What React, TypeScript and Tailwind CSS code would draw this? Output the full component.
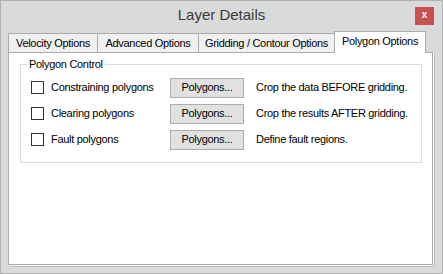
const rows = [
  { label: "Constraining polygons", note: "Crop the data BEFORE gridding." },
  { label: "Clearing polygons", note: "Crop the results AFTER gridding." },
  { label: "Fault polygons", note: "Define fault regions." },
];

const tabs = [
  { name: "Velocity Options", w: "w-[90px]" },
  { name: "Advanced Options", w: "w-[102px]" },
  { name: "Gridding / Contour Options", w: "w-[137px]" },
];

export default function App() {
  return (
    <div className="w-[443px] h-[274px] bg-[#dadada] border border-[#b0b0b0] flex flex-col font-['Liberation_Sans',Arial,sans-serif] text-[11px] tracking-[-0.3px] text-black">
      {/* title bar */}
      <div className="h-[30px] grid grid-cols-[1fr_auto_1fr] items-center">
        <div />
        <div className="text-[15px] tracking-normal text-[#3a3a3a] pb-[1px]">Layer Details</div>
        <div className="flex justify-end pr-[8px]">
          <div className="w-[19px] h-[18px] bg-[#c75050] flex items-center justify-center text-white text-[10px] font-bold leading-none pb-[2px]">
            x
          </div>
        </div>
      </div>

      <div className="flex-1 flex flex-col pl-[7px] pr-[9px] pb-[8px]">
        {/* tabs */}
        <div className="h-[21px] flex items-end">
          {tabs.map((t, i) => (
            <div
              key={t.name}
              className={`${t.w} ${i > 0 ? "-ml-px" : ""} h-[19px] bg-[#f0f0f0] border border-b-0 border-[#acacac] flex items-center justify-center`}
            >
              {t.name}
            </div>
          ))}
          <div className="w-[92px] -ml-px h-[22px] -mb-px relative z-10 bg-white border border-b-0 border-[#acacac] flex items-center justify-center pb-[2px]">
            Polygon Options
          </div>
        </div>

        {/* panel */}
        <div className="flex-1 bg-white border border-[#acacac] shadow-[1px_1px_0_#f4f4f4,2px_2px_0_#bdbdbd] pl-[11px] pr-[10px]">
          <fieldset className="border border-[#dcdcdc] mt-[3px] h-[107px]">
            <legend className="ml-[6px] px-[2px] text-[11px]">Polygon Control</legend>
            <div className="flex flex-col pl-[10px] pt-[2px]">
              {rows.map((r) => (
                <div key={r.label} className="h-[26px] flex items-center">
                  <div className="w-[139px] flex items-center gap-[7px]">
                    <div className="w-[13px] h-[13px] border border-[#333333] bg-white" />
                    <span>{r.label}</span>
                  </div>
                  <div className="w-[74px] h-[20px] bg-[#e1e1e1] border border-[#adadad] flex items-center justify-center">
                    Polygons...
                  </div>
                  <span className="ml-[12px]">{r.note}</span>
                </div>
              ))}
            </div>
          </fieldset>
        </div>
      </div>
    </div>
  );
}
